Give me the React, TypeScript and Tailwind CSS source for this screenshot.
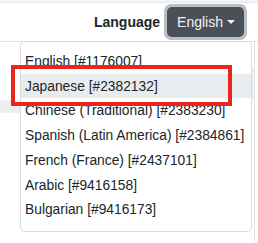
import React from "react";

const items = [
  "English [#1176007]",
  "Japanese [#2382132]",
  "Chinese (Traditional) [#2383230]",
  "Spanish (Latin America) [#2384861]",
  "French (France) [#2437101]",
  "Arabic [#9416158]",
  "Bulgarian [#9416173]",
];

export default function App() {
  return (
    <div
      className="relative w-[258px] h-[243px] overflow-hidden bg-white text-[#212529]"
      style={{ fontFamily: "'Liberation Sans', Arial, sans-serif" }}
    >
      <div className="h-[3px] bg-[#f3f4f6] border-b border-[#e5e7eb]" />
      <div className="h-[39px] flex items-center justify-end pr-[11px] gap-[4px] border-b border-[#dee2e6]">
        <span className="font-bold text-[14px] leading-none">Language</span>
        <div className="rounded-[7px] p-[3px] bg-[#b9bec4]">
          <button className="h-[30px] pl-[10px] pr-[9px] rounded-[5px] bg-[#4a5058] text-[#eef0f2] text-[14px] flex items-center gap-[4px]">
            English
            <span className="w-0 h-0 border-l-[4px] border-r-[4px] border-t-[4px] border-l-transparent border-r-transparent border-t-[#eef0f2]" />
          </button>
        </div>
      </div>
      <div className="w-[255px] h-[201px] border-r border-[#dee2e6] flex flex-col">
        <div className="h-[26px]" />
        <div className="h-[32px] flex">
          <div className="w-[20px]" />
          <div className="flex-1 bg-[#efefef]" />
        </div>
        <div className="h-[13px] flex">
          <div className="w-[20px] bg-[#efefef]" />
          <div className="flex-1" />
        </div>
      </div>

      <div className="absolute left-[20px] top-[41px] w-[232px] h-[191px] bg-white border border-[#d9dcdf] rounded-[5px] pt-[7px] pb-[9px] flex flex-col">
        {items.map((t, i) => (
          <div
            key={t}
            className={`h-[25px] flex items-center pl-[4px] pt-[2px] text-[13.8px] whitespace-nowrap ${
              i === 1 ? "bg-[#e9ecef]" : ""
            }`}
          >
            {t}
          </div>
        ))}
      </div>
      <div className="absolute left-[11px] top-[65px] w-[221px] h-[41px] border-[4px] border-[#e8261c]" />
    </div>
  );
}
